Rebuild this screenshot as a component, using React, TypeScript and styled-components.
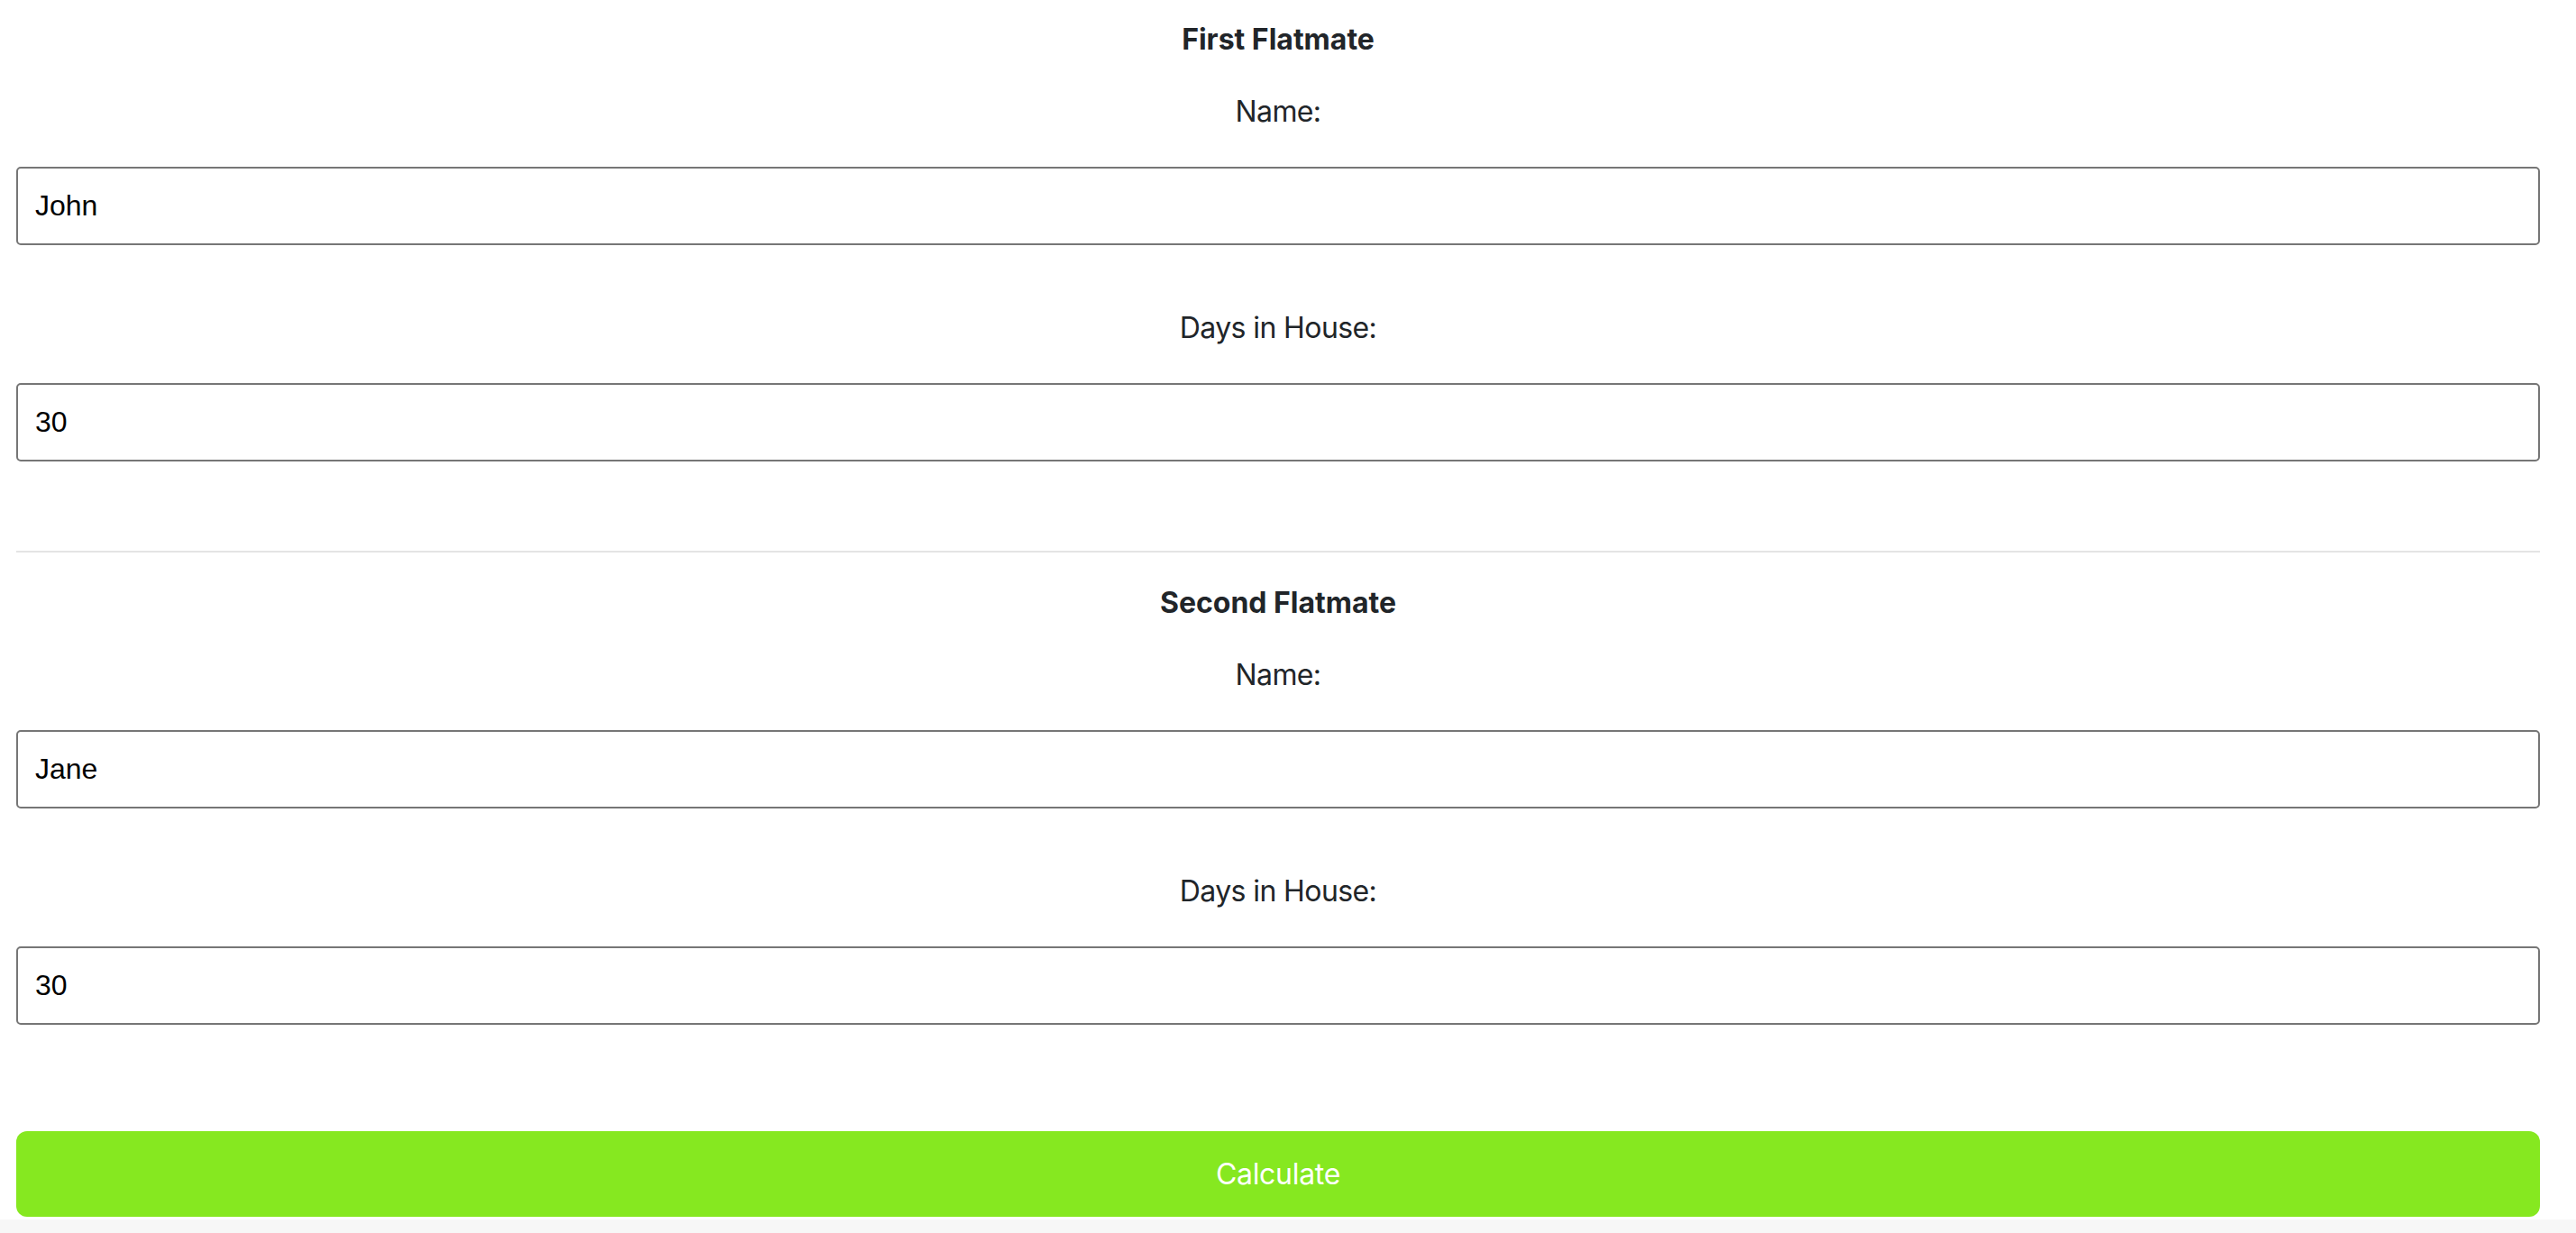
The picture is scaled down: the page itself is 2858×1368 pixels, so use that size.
import React from "react";
import styled, { createGlobalStyle } from "styled-components";

const Global = createGlobalStyle`
  html, body {
    margin: 0;
    padding: 0;
    background: #f7f7f7;
  }
  body {
    font-family: Inter, "Noto Sans", sans-serif;
    color: #212529;
  }
  * { box-sizing: border-box; }
`;

const Card = styled.main`
  background: #ffffff;
  padding: 25px 40px 3px 18px;
  box-shadow: 0 6px 14px rgba(0, 0, 0, 0.05);
  display: flex;
  flex-direction: column;
`;

const Section = styled.section`
  display: flex;
  flex-direction: column;
`;

const Title = styled.h3`
  margin: 0 0 42px;
  font-size: 32px;
  line-height: 38px;
  font-weight: 700;
  text-align: center;
  color: #212529;
`;

const Label = styled.label`
  display: block;
  margin: 0 0 42px;
  font-size: 32px;
  line-height: 38px;
  font-weight: 400;
  letter-spacing: -0.6px;
  text-align: center;
  color: #212529;
`;

const Input = styled.input<{ $gapAfter: number }>`
  display: block;
  width: 100%;
  height: 87px;
  margin: 0 0 ${(p) => p.$gapAfter}px;
  padding: 0 19px;
  border: 2px solid #767676;
  border-radius: 5px;
  background: #ffffff;
  font-family: "Liberation Sans", Arial, sans-serif;
  font-size: 32px;
  color: #000000;
  outline: none;
`;

const Divider = styled.hr`
  margin: 0 0 37px;
  border: none;
  height: 2px;
  background: #e4e4e4;
`;

const Button = styled.button`
  display: block;
  width: 100%;
  height: 95px;
  margin: 0;
  border: none;
  border-radius: 12px;
  background: #86e820;
  color: #ffffff;
  font-family: Inter, "Noto Sans", sans-serif;
  font-size: 32px;
  font-weight: 400;
  letter-spacing: -0.3px;
  cursor: pointer;
`;

type Mate = { title: string; name: string; days: string; gapAfter: number };

const mates: Mate[] = [
  { title: "First Flatmate", name: "John", days: "30", gapAfter: 99 },
  { title: "Second Flatmate", name: "Jane", days: "30", gapAfter: 118 },
];

function FlatmateSection({ mate }: { mate: Mate }) {
  return (
    <Section>
      <Title>{mate.title}</Title>
      <Label>Name:</Label>
      <Input $gapAfter={73} type="text" defaultValue={mate.name} />
      <Label>Days in House:</Label>
      <Input $gapAfter={mate.gapAfter} type="number" defaultValue={mate.days} />
    </Section>
  );
}

export default function App() {
  return (
    <>
      <Global />
      <Card>
        <FlatmateSection mate={mates[0]} />
        <Divider />
        <FlatmateSection mate={mates[1]} />
        <Button>Calculate</Button>
      </Card>
    </>
  );
}
